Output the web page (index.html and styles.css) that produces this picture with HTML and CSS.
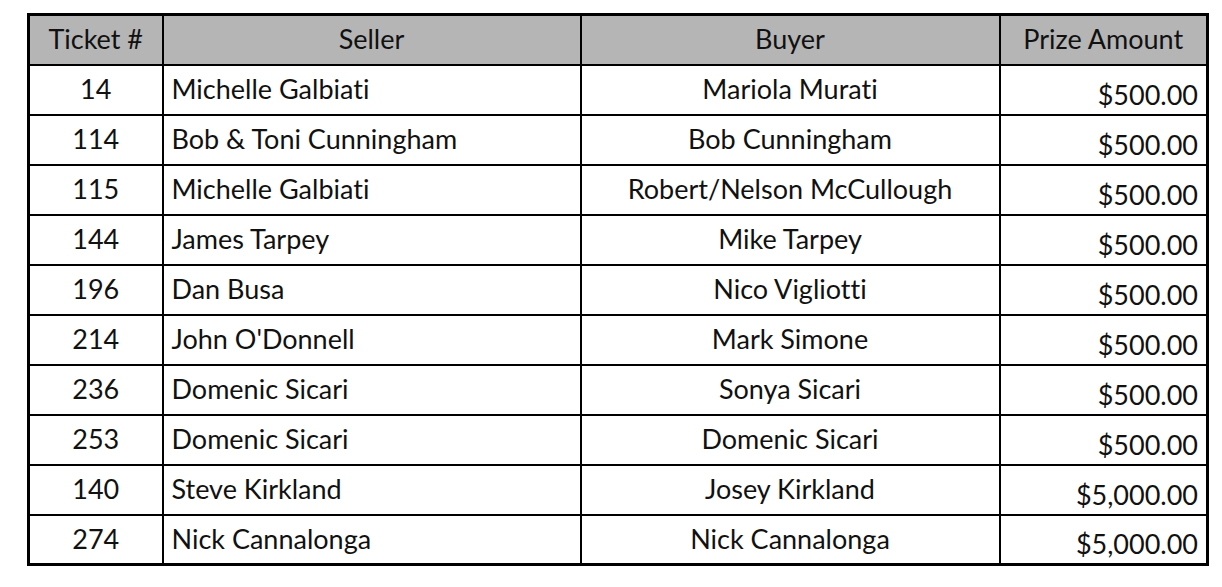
FILE: index.html
```html
<!DOCTYPE html>
<html>
<head>
<meta charset="utf-8">
<link rel="stylesheet" href="styles.css">
</head>
<body>
<table class="prizes">
  <colgroup>
    <col class="c-ticket"><col class="c-seller"><col class="c-buyer"><col class="c-prize">
  </colgroup>
  <thead>
    <tr><th>Ticket #</th><th>Seller</th><th>Buyer</th><th>Prize Amount</th></tr>
  </thead>
  <tbody>
    <tr><td class="num">14</td><td class="seller">Michelle Galbiati</td><td class="buyer">Mariola Murati</td><td class="amt">$500.00</td></tr>
    <tr><td class="num">114</td><td class="seller">Bob &amp; Toni Cunningham</td><td class="buyer">Bob Cunningham</td><td class="amt">$500.00</td></tr>
    <tr><td class="num">115</td><td class="seller">Michelle Galbiati</td><td class="buyer">Robert/Nelson McCullough</td><td class="amt">$500.00</td></tr>
    <tr><td class="num">144</td><td class="seller">James Tarpey</td><td class="buyer">Mike Tarpey</td><td class="amt">$500.00</td></tr>
    <tr><td class="num">196</td><td class="seller">Dan Busa</td><td class="buyer">Nico Vigliotti</td><td class="amt">$500.00</td></tr>
    <tr><td class="num">214</td><td class="seller">John O'Donnell</td><td class="buyer">Mark Simone</td><td class="amt">$500.00</td></tr>
    <tr><td class="num">236</td><td class="seller">Domenic Sicari</td><td class="buyer">Sonya Sicari</td><td class="amt">$500.00</td></tr>
    <tr><td class="num">253</td><td class="seller">Domenic Sicari</td><td class="buyer">Domenic Sicari</td><td class="amt">$500.00</td></tr>
    <tr><td class="num">140</td><td class="seller">Steve Kirkland</td><td class="buyer">Josey Kirkland</td><td class="amt">$5,000.00</td></tr>
    <tr><td class="num">274</td><td class="seller">Nick Cannalonga</td><td class="buyer">Nick Cannalonga</td><td class="amt">$5,000.00</td></tr>
  </tbody>
</table>
</body>
</html>
```
FILE: styles.css
```css
html, body {
  margin: 0;
  padding: 0;
  background: #ffffff;
}
body {
  padding: 13px 0 0 27px;
  font-family: "Lato", "Liberation Sans", sans-serif;
  color: #111111;
}
.prizes {
  border-collapse: collapse;
  table-layout: fixed;
  width: 1179px;
  border: 3px solid #000;
}
.c-ticket { width: 134px; }
.c-seller { width: 418px; }
.c-buyer { width: 419px; }
.c-prize { width: 208px; }
.prizes th,
.prizes td {
  border: 2px solid #000;
  height: 50px;
  padding: 0 8px;
  box-sizing: border-box;
  font-size: 27px;
  font-weight: 400;
  line-height: 1;
  white-space: nowrap;
  font-variant-ligatures: none;
}
.prizes th {
  background: #b5b5b5;
  text-align: center;
  vertical-align: middle;
  padding-bottom: 2px;
}
.prizes td {
  vertical-align: middle;
  padding-bottom: 2px;
}
.num, .buyer { text-align: center; }
.seller { text-align: left; }
.amt {
  text-align: right;
  vertical-align: bottom !important;
  padding-bottom: 6px !important;
}
```
